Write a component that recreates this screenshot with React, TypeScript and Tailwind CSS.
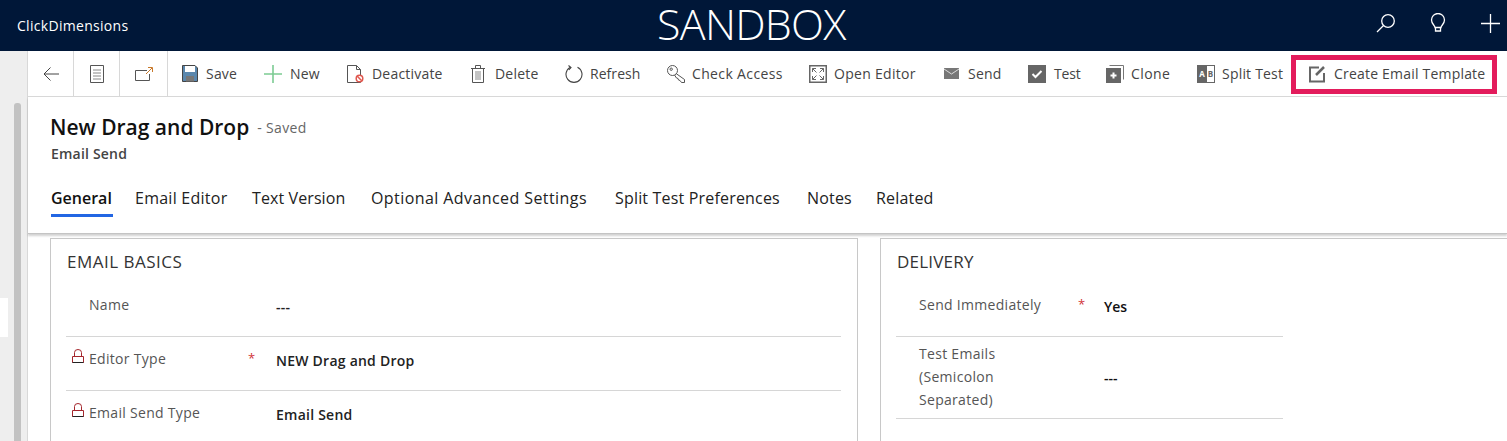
import type { ReactNode } from "react";

const font = "font-['Open_Sans','Noto_Sans',sans-serif]";

function Cmd({ icon, label, w, slot, track = "tracking-[0.2px]" }: { icon: ReactNode; label: string; w: string; slot: string; track?: string }) {
  return (
    <div className={`flex items-center shrink-0 ${w}`}>
      <div className={`flex items-center shrink-0 ${slot}`}>{icon}</div>
      <span className={`text-[14px] text-[#444] whitespace-nowrap ${track}`}>{label}</span>
    </div>
  );
}

function LockIcon() {
  return (
    <svg width="12" height="15" viewBox="0 0 12 15" fill="none" stroke="#a4262c">
      <path d="M.5 7.500h11v6H.5z" />
      <path d="M2.500 7.500V3.500a3.500 3 0 0 1 7 0v4" />
      <path d="M.5 13.500h11" stroke="#222" />
    </svg>
  );
}

function Row({ label, lock, req, value }: { label: string; lock?: boolean; req?: boolean; value: string }) {
  return (
    <div className="flex h-[54px] border-b border-[#d6d6d6] pt-[12px]">
      <div className="w-[23px] pl-[6px]">{lock && <LockIcon />}</div>
      <div className="w-[159px] text-[14px] leading-[19px] text-[#555] tracking-[0.3px]">{label}</div>
      <div className="w-[28px] text-[13px] leading-[19px] text-[#d13438]">{req ? "*" : ""}</div>
      <div className="text-[14px] leading-[19px] pt-[2px] text-[#222] font-semibold tracking-[0.24px]">{value}</div>
    </div>
  );
}

export default function App() {
  return (
    <div className={`${font} w-[1507px] h-[441px] overflow-hidden bg-white flex flex-col`}>
      {/* top bar */}
      <div className="h-[51px] bg-[#001738] flex items-center text-white relative shrink-0">
        <span className="ml-[17px] text-[14px] tracking-[0.3px]">ClickDimensions</span>
        <span className="absolute left-[657px] top-0 text-[43px] leading-[48px] font-light tracking-[-0.7px]">SANDBOX</span>
        <div className="ml-auto flex items-center pr-[7px] pb-[5px]">
          <svg width="20" height="20" viewBox="0 0 20 20" fill="none" stroke="white" strokeWidth="1.3" className="mr-[34px]">
            <circle cx="12" cy="8" r="6.3" />
            <path d="M7.500 12.500 1 19" />
          </svg>
          <svg width="16" height="20" viewBox="0 0 16 20" fill="none" stroke="white" strokeWidth="1.3" className="mr-[35px]">
            <path d="M5 14.500c0-2-3.500-3.600-3.500-7.500a6.500 6.500 0 0 1 13 0c0 3.900-3.500 5.500-3.500 7.500z" />
            <path d="M5.500 14.500v3.500h5v-3.500" />
          </svg>
          <svg width="19" height="19" viewBox="0 0 19 19" fill="none" stroke="white" strokeWidth="1.3">
            <path d="M9.500 0v19M0 9.500h19" />
          </svg>
        </div>
      </div>

      <div className="flex flex-1 min-h-0">
        {/* nav rail */}
        <div className="w-[28px] shrink-0 bg-[#eeeeee] border-r border-[#d8d8d8] relative">
          <div className="absolute left-[14px] top-[52px] w-[7px] h-[340px] bg-[#c2c2c2] rounded-t-[3px]" />
          <div className="absolute left-0 top-[247px] w-[8px] h-[39px] bg-white" />
        </div>

        <div className="flex-1 min-w-0 flex flex-col">
          {/* command bar */}
          <div className="h-[46px] shrink-0 border-b border-[#d8d8d8] flex items-stretch">
            <div className="w-[46px] shrink-0 border-r border-[#d8d8d8] flex items-center justify-center">
              <svg width="16" height="14" viewBox="0 0 16 14" fill="none" stroke="#444" strokeWidth="1">
                <path d="M16 7H1M7.500 .5 1 7l6.500 6.500" />
              </svg>
            </div>
            <div className="w-[46px] shrink-0 border-r border-[#d8d8d8] flex items-center justify-center">
              <svg width="14" height="18" viewBox="0 0 14 18" fill="none" stroke="#555">
                <path d="M.5.500h13v17H.5z" />
                <path d="M3 5h8M3 8h8M3 11h8M3 14h8" stroke="#888" />
              </svg>
            </div>
            <div className="w-[48px] shrink-0 border-r border-[#d8d8d8] flex items-center justify-center mr-[14px]">
              <svg width="18" height="14" viewBox="0 0 18 14" fill="none" stroke="#555">
                <path d="M12 3.500H.5v10h14V7" />
                <path d="M11 7l6-6M13 .5h4.500V5" stroke="#c8792a" />
              </svg>
            </div>
            <Cmd w="w-[82px]" slot="w-[24px]" label="Save" icon={
              <svg width="16" height="17" viewBox="0 0 16 17">
                <path d="M.5.500h12.500l2.500 2.500v13.500H.5z" fill="#5a87ad" stroke="#444" />
                <rect x="3" y="1" width="10" height="6" fill="#fff" />
                <rect x="4" y="11" width="8" height="5.500" fill="#777" />
              </svg>} />
            <Cmd w="w-[83px]" slot="w-[26px]" label="New" icon={
              <svg width="18" height="18" viewBox="0 0 18 18"><path d="M9 0v18M0 9h18" stroke="#7ccb93" strokeWidth="1.600" /></svg>} />
            <Cmd w="w-[124px]" slot="w-[25px]" label="Deactivate" icon={
              <svg width="17" height="18" viewBox="0 0 17 18" fill="none">
                <path d="M.5.500h9l4 4v13H.5z" stroke="#555" fill="#fff" />
                <path d="M9.500.500v4h4" stroke="#555" />
                <circle cx="12.500" cy="13.500" r="3.300" fill="#fff" stroke="#e0584f" strokeWidth="1.500" />
                <path d="m10.300 11.300 4.400 4.400" stroke="#e0584f" strokeWidth="1.500" />
              </svg>} />
            <Cmd w="w-[94px]" slot="w-[24px]" label="Delete" icon={
              <svg width="14" height="18" viewBox="0 0 14 18" fill="none" stroke="#555">
                <path d="M0 3.500h14M4.500 3.500v-3h5v3M1.500 3.500v14h11v-14" />
                <path d="M5 6v9M7 6v9M9 6v9" stroke="#888" />
              </svg>} />
            <Cmd w="w-[102px]" slot="w-[25px]" label="Refresh" track="tracking-[0.05px]" icon={
              <svg width="18" height="18" viewBox="0 0 18 18" fill="none" stroke="#444" strokeWidth="1.100">
                <path d="M12.500 2.200a8 8 0 1 1-7 0" />
                <path d="M3.500 .5 6 2.500 3.800 5" />
              </svg>} />
            <Cmd w="w-[142px]" slot="w-[25px]" label="Check Access" track="tracking-[0.36px]" icon={
              <svg width="18" height="18" viewBox="0 0 18 18" fill="none" stroke="#555">
                <circle cx="5.500" cy="5.500" r="5" />
                <circle cx="4.200" cy="4.200" r="1.200" />
                <path d="M9.300 8.700 17.500 14.500v3h-3l-1.500-2-1.500-.5-.5-1.500-1.500-.5-2-3" />
              </svg>} />
            <Cmd w="w-[135px]" slot="w-[25px]" label="Open Editor" track="tracking-[0.3px]" icon={
              <svg width="18" height="18" viewBox="0 0 18 18" fill="none">
                <path d="M.75.750h16.500v16.500H.75z" stroke="#666" strokeWidth="1.500" />
                <path d="M3.500 3.500 7.500 7.500M3.500 3.500h3.500M3.500 3.500V7M14.500 3.500l-4 4M14.500 3.500h-3.500M14.500 3.500V7M3.500 14.500l4-4M3.500 14.500H7M3.500 14.500V11M14.500 14.500l-4-4M14.500 14.500H11M14.500 14.500V11" stroke="#666" />
              </svg>} />
            <Cmd w="w-[84px]" slot="w-[24px]" label="Send" icon={
              <svg width="15" height="11" viewBox="0 0 15 11">
                <rect width="15" height="11" fill="#777" />
                <path d="m0 1 7.500 5L15 1" fill="none" stroke="#ddd" />
              </svg>} />
            <Cmd w="w-[78px]" slot="w-[26px]" label="Test" track="tracking-[-0.2px]" icon={
              <svg width="18" height="18" viewBox="0 0 18 18">
                <rect width="18" height="18" fill="#666" />
                <path d="m4.500 9 3 3 6-6" fill="none" stroke="#fff" strokeWidth="2" />
              </svg>} />
            <Cmd w="w-[91px]" slot="w-[25px]" label="Clone" track="tracking-[0.4px]" icon={
              <svg width="18" height="18" viewBox="0 0 18 18">
                <path d="M3.500 .5h14v14" fill="none" stroke="#777" />
                <rect y="3" width="15" height="15" fill="#666" />
                <path d="M7.500 7.500v6M4.500 10.500h6" stroke="#fff" strokeWidth="2" />
              </svg>} />
            <Cmd w="w-[94px]" slot="w-[25px]" label="Split Test" icon={
              <svg width="18" height="18" viewBox="0 0 18 18">
                <rect width="18" height="18" fill="#666" />
                <rect x="10" y="1" width="7" height="16" fill="#fff" />
                <text x="5" y="12" fontSize="8" fontWeight="700" textAnchor="middle" fill="#fff">A</text>
                <text x="13.500" y="12" fontSize="8" fontWeight="700" textAnchor="middle" fill="#666">B</text>
              </svg>} />
            <div className="mt-[4px] w-[206px] h-[39px] border-[5px] border-[#e31c5c] flex items-center pl-[13px] pb-[2px] shrink-0">
              <svg width="17" height="18" viewBox="0 0 17 18" fill="none" className="mr-[8px]">
                <path d="M10 2.500H1v14h14V8" stroke="#666" strokeWidth="2" />
                <path d="m7 10 8-8" stroke="#666" strokeWidth="2.500" />
              </svg>
              <span className="text-[14px] text-[#444] tracking-[0.2px] whitespace-nowrap">Create Email Template</span>
            </div>
          </div>

          {/* record header */}
          <div className="h-[137px] shrink-0 border-b border-[#c4c4c4] shadow-[0_2px_2px_rgba(0,0,0,0.18)] pl-[23px] pt-[16px] relative z-10 bg-white">
            <div className="flex items-center h-[28px] -ml-[1px]">
              <span className="text-[21px] leading-[28px] font-semibold text-[#111]">New Drag and Drop</span>
              <span className="ml-[8px] pt-[1px] text-[14px] leading-[28px] text-[#666] tracking-[0.33px]">- Saved</span>
            </div>
            <div className="text-[14px] leading-[20px] mt-[3px] font-semibold text-[#444] tracking-[0.2px]">Email Send</div>
            <div className="flex mt-[22px] text-[16px] leading-[24px] text-[#222] tracking-[0.18px]">
              <div className="w-[84px]">
                <div className="w-[62px] font-semibold text-[#111] border-b-[3px] border-[#2266e3] pb-[4px] whitespace-nowrap tracking-normal">General</div>
              </div>
              <div className="w-[117px] tracking-[0.25px]">Email Editor</div>
              <div className="w-[119px] tracking-[0.1px]">Text Version</div>
              <div className="w-[244px] tracking-[0.42px]">Optional Advanced Settings</div>
              <div className="w-[192px]">Split Test Preferences</div>
              <div className="w-[69px]">Notes</div>
              <div>Related</div>
            </div>
          </div>

          {/* form sections */}
          <div className="flex flex-1 min-h-0 pl-[22px] pt-[4px] gap-[22px] overflow-hidden">
            <section className="w-[808px] h-[300px] shrink-0 border border-[#c8c8c8] bg-white pl-[15px] pr-[16px]">
              <h2 className="text-[17px] leading-[22px] mt-[12px] mb-[10px] ml-[1px] text-[#333] tracking-[0.5px]">EMAIL BASICS</h2>
              <Row label="Name" value="---" />
              <Row label="Editor Type" lock req value="NEW Drag and Drop" />
              <Row label="Email Send Type" lock value="Email Send" />
            </section>
            <section className="w-[700px] h-[300px] shrink-0 border border-[#c8c8c8] bg-white pl-[15px]">
              <h2 className="text-[17px] leading-[22px] mt-[12px] mb-[10px] ml-[1px] text-[#333] tracking-[0.2px]">DELIVERY</h2>
              <div className="w-[387px]">
                <div className="flex h-[54px] border-b border-[#d6d6d6] pt-[12px] pl-[23px]">
                  <div className="w-[159px] text-[14px] leading-[19px] text-[#555] tracking-[0.3px]">Send Immediately</div>
                  <div className="w-[26px] text-[13px] leading-[19px] text-[#d13438]">*</div>
                  <div className="text-[14px] leading-[19px] pt-[2px] font-semibold text-[#111]">Yes</div>
                </div>
                <div className="flex items-center h-[82px] border-b border-[#d6d6d6] pl-[23px]">
                  <div className="w-[185px] pb-[2px] text-[14px] leading-[23px] text-[#555] tracking-[0.3px]">Test Emails<br />(Semicolon<br />Separated)</div>
                  <div className="text-[14px] font-semibold text-[#111]">---</div>
                </div>
              </div>
            </section>
          </div>
        </div>
      </div>
    </div>
  );
}
